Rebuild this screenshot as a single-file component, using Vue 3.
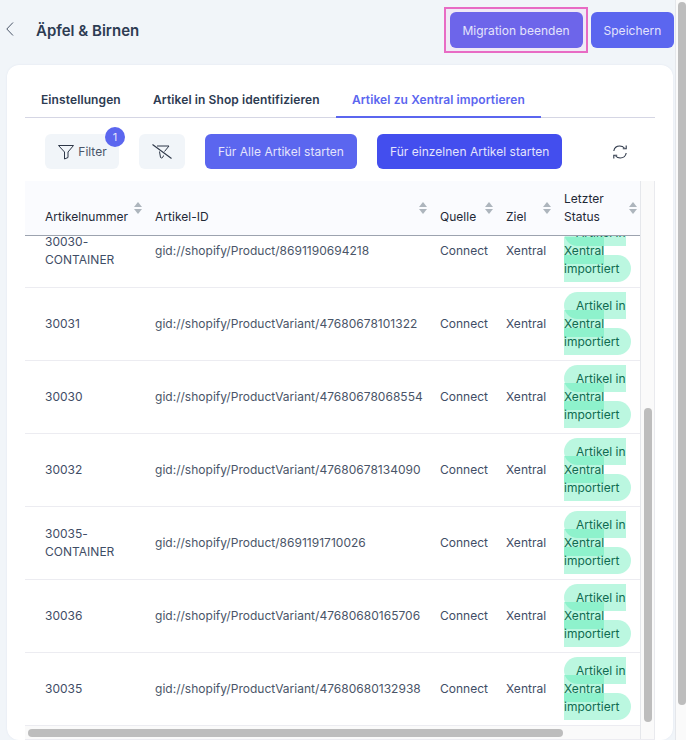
<script setup>
const rows = [
  { nr: '30030-CONTAINER', id: 'gid://shopify/Product/8691190694218' },
  { nr: '30031', id: 'gid://shopify/ProductVariant/47680678101322' },
  { nr: '30030', id: 'gid://shopify/ProductVariant/47680678068554' },
  { nr: '30032', id: 'gid://shopify/ProductVariant/47680678134090' },
  { nr: '30035-CONTAINER', id: 'gid://shopify/Product/8691191710026' },
  { nr: '30036', id: 'gid://shopify/ProductVariant/47680680165706' },
  { nr: '30035', id: 'gid://shopify/ProductVariant/47680680132938' },
]
const heads = ['Artikelnummer', 'Artikel-ID', 'Quelle', 'Ziel', 'Letzter Status']
</script>

<template>
  <div class="page">
    <header class="top">
      <div class="title-wrap">
        <svg class="back" width="8" height="16" viewBox="0 0 8 16"><path d="M7 .5.8 7 7 13.500" fill="none" stroke="#4a5568" stroke-width="1"/></svg>
        <h1 class="title">Äpfel &amp; Birnen</h1>
      </div>
      <div class="actions">
        <span class="highlight"><button class="btn btn-soft">Migration beenden</button></span>
        <button class="btn btn-main save">Speichern</button>
      </div>
    </header>

    <main class="card">
      <nav class="tabs">
        <a class="tab">Einstellungen</a>
        <a class="tab">Artikel in Shop identifizieren</a>
        <a class="tab active">Artikel zu Xentral importieren</a>
      </nav>

      <div class="toolbar">
        <button class="btn-light filter">
          <svg width="18" height="16" viewBox="0 0 18 16"><path d="M1.500 1.500h15L11 8v5.500L7.500 15V8z" fill="none" stroke="#2d3748" stroke-width="1" stroke-linejoin="round"/></svg>
          Filter
          <span class="badge">1</span>
        </button>
        <button class="btn-light clear">
          <svg width="20" height="18" viewBox="0 0 20 18"><path d="M5 3h12l-4.500 5.500M7.500 8.500 8.500 14.500C9.500 15.500 11 15 11.500 12.500" fill="none" stroke="#2d3748" stroke-width="1"/><path d="M.5 1.500 19.500 15.500" stroke="#2d3748" stroke-width="1.100"/></svg>
        </button>
        <button class="btn btn-main run">Für Alle Artikel starten</button>
        <button class="btn btn-deep run">Für einzelnen Artikel starten</button>
        <button class="refresh">
          <svg width="16" height="16" viewBox="0 0 16 16" fill="none" stroke="#2d3748" stroke-width="1.100"><path d="M1.800 7C2.300 4 4.800 2 7.800 2c1.800 0 3.500.8 4.600 2"/><path d="M14.200 9c-.5 3-3 5-6 5-1.800 0-3.500-.8-4.600-2"/><path d="M14.200 1.500v3.300h-3.400M1.800 14.500v-3.300h3.400"/></svg>
        </button>
      </div>

      <div class="table-box">
        <div class="row head">
          <div v-for="h in heads" :key="h" class="th">
            <span class="th-label">{{ h }}</span>
            <svg class="sort" width="8" height="12" viewBox="0 0 8 12"><path d="M4 0 8 5H0z" fill="#adb5bd"/><path d="M0 7h8l-4 5z" fill="#adb5bd"/></svg>
          </div>
        </div>
        <div class="body">
          <div class="body-in">
            <div v-for="r in rows" :key="r.id" class="row item">
              <div class="td">{{ r.nr }}</div>
              <div class="td">{{ r.id }}</div>
              <div class="td">Connect</div>
              <div class="td">Xentral</div>
              <div class="td"><span class="pill">Artikel in Xentral importiert</span></div>
            </div>
          </div>
        </div>
        <div class="vbar"><i></i></div>
        <div class="hbar"><i></i></div>
      </div>
    </main>

    <div class="page-bar"><i></i></div>
  </div>
</template>

<style scoped>
.page {
  position: relative;
  height: 740px;
  overflow: hidden;
  background: #f1f5f9;
  font-family: Inter, "Liberation Sans", sans-serif;
  color: #2d3748;
  padding-right: 12px;
  box-sizing: border-box;
}
.top {
  display: flex;
  justify-content: space-between;
  align-items: center;
  height: 60px;
  padding-left: 6px;
}
.title-wrap { display: flex; align-items: center; gap: 22px; }
.back { display: block; }
.title { margin: 0; font-size: 15px; font-weight: 600; color: #2d3b52; }
.actions { display: flex; align-items: center; gap: 3px; }
.highlight {
  display: block;
  padding: 3px 3.500px;
  border: 2px solid #e86bc4;
  background: #f0e9f6;
}
.btn {
  border: 0;
  font-family: inherit;
  font-size: 12px;
  letter-spacing: .03px;
  color: #e4e4fc;
  border-radius: 6px;
  height: 36px;
  cursor: pointer;
  display: block;
}
.btn-soft { width: 133px; background: #6d65ea; }
.btn-main { background: #5b66ef; }
.btn-deep { background: #434eee; }
.save { width: 83px; }
.card {
  margin-left: 7px;
  margin-top: 5px;
  height: 675px;
  width: 666px;
  background: #fff;
  border-radius: 12px;
  box-shadow: 0 0 2px #dfe5ef;
  padding: 18px 18px 0;
  box-sizing: border-box;
}
.tabs {
  display: flex;
  gap: .25px;
  height: 34px;
  border-bottom: 1px solid #d5d6e4;
}
.tab {
  font-size: 12px;
  font-weight: 600;
  letter-spacing: .1px;
  line-height: 33px;
  padding: 0 16px;
  color: #2d3b52;
}
.tab.active {
  color: #5b66ef;
  border-bottom: 2px solid #5b66ef;
  height: 33px;
}
.toolbar {
  display: flex;
  align-items: center;
  margin-top: 16px;
  padding-left: 20px;
}
.btn-light {
  position: relative;
  height: 35px;
  background: #f1f5f9;
  border: 0;
  border-radius: 6px;
  font: inherit;
  font-size: 12px;
  color: #4a5568;
  display: flex;
  align-items: center;
  justify-content: center;
  padding: 0;
}
.filter { width: 74px; gap: 3px; margin-right: 20px; }
.clear { width: 46px; margin-right: 20px; }
.badge {
  position: absolute;
  top: -7px;
  right: -6px;
  width: 20px;
  height: 20px;
  border-radius: 50%;
  background: #5b66ef;
  color: #e4e4fc;
  font-size: 11px;
  line-height: 20px;
  text-align: center;
}
.run { height: 35px; padding: 0 13px; }
.run + .run { margin-left: 20px; }
.refresh {
  border: 0;
  background: none;
  padding: 0;
  margin-left: 50px;
  width: 16px;
  height: 16px;
}
.table-box {
  position: relative;
  margin-top: 12px;
  height: 559px;
  width: 630px;
  background: #fafafa;
  border-bottom: 1px solid #ececf1;
  overflow: hidden;
  box-sizing: border-box;
  font-size: 12px;
}
.row {
  display: grid;
  grid-template-columns: 130px 285px 66px 58px 76px;
  width: 615px;
  box-sizing: border-box;
}
.head {
  height: 55px;
  align-items: end;
  padding-bottom: 9px;
  background: #fafbfe;
  border-bottom: 1px solid #9ca3af;
  color: #1f2937;
  line-height: 18px;
}
.th {
  display: flex;
  justify-content: space-between;
  align-items: center;
  height: 36px;
  padding-right: 13px;
}
.th:first-child, .td:first-child { padding-left: 20px; }
.th:last-child { padding-right: 3px; }
.th-label { align-self: flex-end; letter-spacing: .02px; }
.th:last-child .th-label { width: 50px; }
.sort { flex: none; }
.body {
  height: 490px;
  overflow: hidden;
  width: 615px;
  background: #fff;
}
.body-in { margin-top: -21px; }
.item {
  height: 73px;
  align-items: center;
  border-bottom: 1px solid #ececf1;
}
.td {
  color: #3f4d66;
  line-height: 18px;
  letter-spacing: .02px;
}
.td:nth-child(2) { color: #4a5568; }
.td:first-child { padding-right: 30px; }
.td:last-child { padding-right: 5px; }
.pill {
  background: rgba(61, 232, 166, .35);
  color: #0f6b50;
  padding: 6px 12px;
  border-radius: 14px;
}
.vbar {
  position: absolute;
  top: 0;
  right: 0;
  width: 15px;
  height: 100%;
  background: #fafafa;
  border-left: 1px solid #e5e7eb;
  border-right: 1px solid #e9eaee;
  box-sizing: border-box;
}
.vbar i {
  position: absolute;
  left: 3px;
  top: 227px;
  width: 8px;
  height: 314px;
  border-radius: 4px;
  background: #bdbdbd;
}
.hbar {
  position: absolute;
  left: 0;
  right: 15px;
  bottom: 0;
  height: 13px;
  background: #fafafa;
}
.hbar i {
  position: absolute;
  left: 3px;
  top: 3px;
  width: 535px;
  height: 8px;
  border-radius: 4px;
  background: #bdbdbd;
}
.page-bar {
  position: absolute;
  top: 0;
  right: 0;
  width: 11px;
  height: 740px;
  background: #fafafa;
  border-left: 1px solid #e5e7eb;
  box-sizing: border-box;
}
.page-bar i {
  position: absolute;
  left: 2px;
  top: 2px;
  width: 8px;
  height: 703px;
  border-radius: 4px;
  background: #bdbdbd;
}
</style>
